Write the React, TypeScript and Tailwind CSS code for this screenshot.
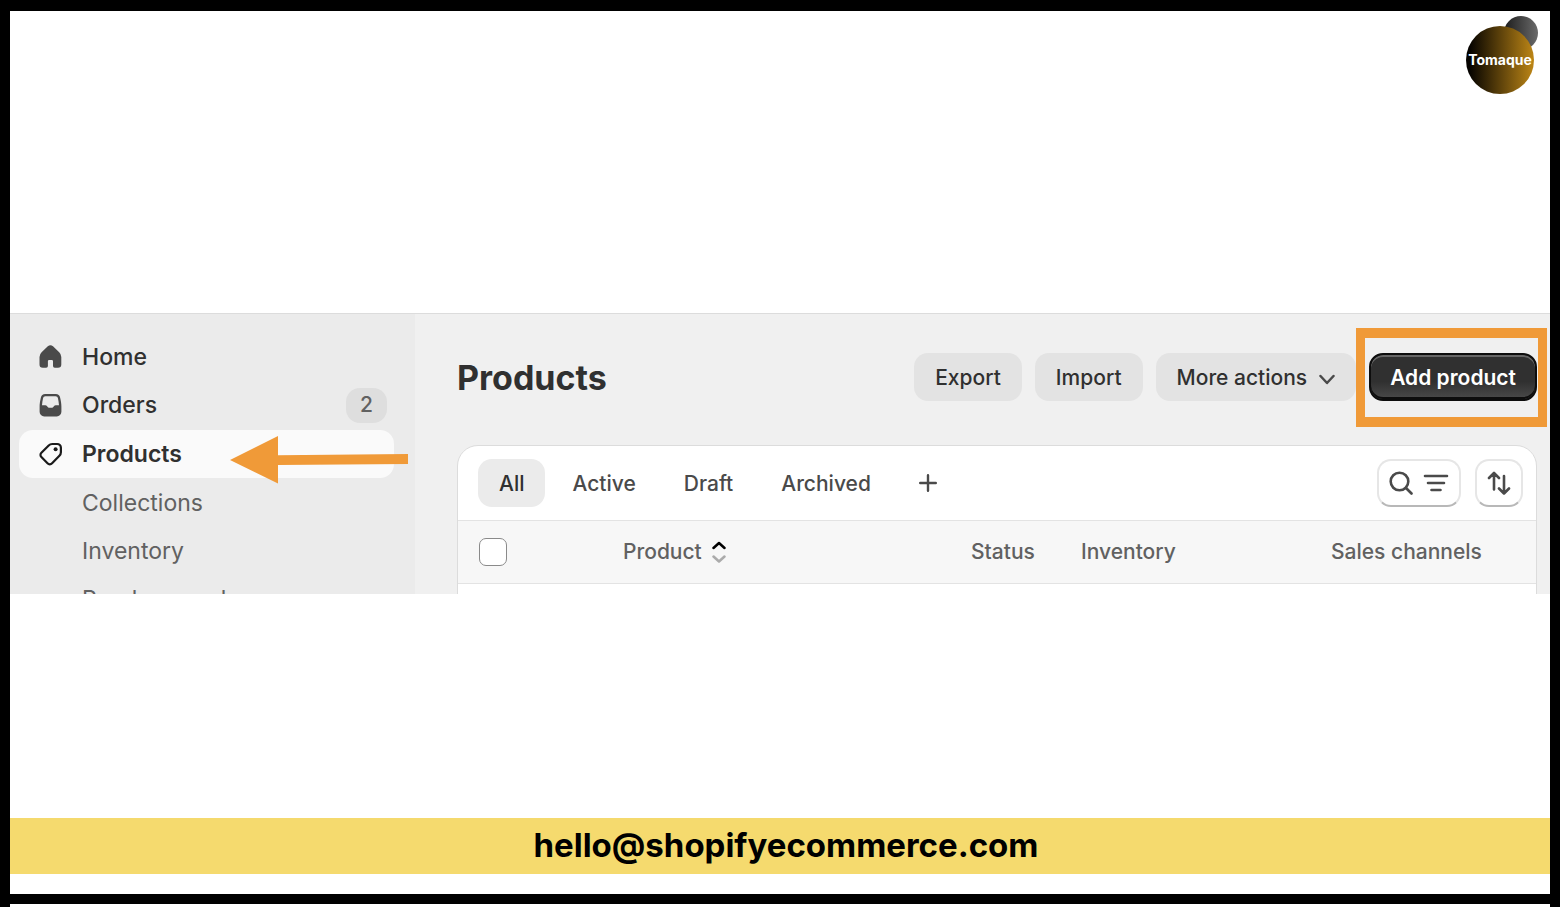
import { useState } from 'react';
import type { ReactNode } from 'react';

const TABS = ['All', 'Active', 'Draft', 'Archived'];
const SUB_ITEMS = ['Collections', 'Inventory', 'Purchase orders'];

function HomeIcon() {
  return (
    <svg viewBox="0 0 24 24" className="h-6 w-6 shrink-0" fill="#4a4a4a" aria-hidden="true">
      <path d="M9.8 1.3a3.9 3.9 0 0 1 5.2 0l6.2 5.9a6.6 6.6 0 0 1 2.1 4.8v7.4a3.3 3.3 0 0 1-3.3 3.3h-3.3a1.7 1.7 0 0 1-1.7-1.7v-4.7a1.2 1.2 0 0 0-1.2-1.2h-2.7a1.2 1.2 0 0 0-1.2 1.2v4.7a1.7 1.7 0 0 1-1.7 1.7H4.8a3.3 3.3 0 0 1-3.3-3.3v-7.4a6.6 6.6 0 0 1 2.1-4.8z" />
    </svg>
  );
}

function OrdersIcon() {
  return (
    <svg viewBox="0 0 24 24" className="h-6 w-6 shrink-0" fill="#4a4a4a" aria-hidden="true">
      <path
        fillRule="evenodd"
        d="M7.2 1h10.6a4.4 4.4 0 0 1 4.3 3.6c.8 3.5 1.3 6.3 1.3 9v5.2a4.6 4.6 0 0 1-4.6 4.6H6.2a4.6 4.6 0 0 1-4.6-4.6v-5.2c0-2.7.5-5.5 1.3-9A4.4 4.4 0 0 1 7.2 1zm.2 2.2a2.3 2.3 0 0 0-2.3 1.9c-.5 2.5-.9 4.7-1.1 7.1h3.3c.7 0 1.2.3 1.6.8l.8 1.1c.3.4.7.6 1.2.6h3.2c.5 0 .9-.2 1.2-.6l.8-1.1c.4-.5.9-.8 1.6-.8H21c-.2-2.4-.6-4.6-1.1-7.1a2.3 2.3 0 0 0-2.3-1.9z"
      />
    </svg>
  );
}

function TagIcon() {
  return (
    <svg viewBox="0 0 24 24" className="h-6 w-6 shrink-0" fill="none" aria-hidden="true">
      <path
        d="M14.2 2h5a3.7 3.7 0 0 1 3.7 3.7v4.6a5 5 0 0 1-1.5 3.5l-7.3 7.5a3.2 3.2 0 0 1-4.6 0l-6.1-6.2a3 3 0 0 1 0-4.3l7.3-7.3A5 5 0 0 1 14.2 2z"
        stroke="#1a1a1a"
        strokeWidth="2.2"
        strokeLinejoin="round"
      />
      <circle cx="17.6" cy="7.2" r="2" fill="#1a1a1a" />
    </svg>
  );
}

function Arrow() {
  return (
    <svg viewBox="0 0 178 48" className="absolute left-[211px] top-1.5 h-12 w-[178px]" fill="#f09a38" aria-hidden="true">
      <path d="M0 24 48 0v19.2L178 18v10L48 29v18.5z" />
    </svg>
  );
}

function Logo() {
  return (
    <svg viewBox="0 0 74 80" className="h-20 w-[74px]" role="img" aria-label="Tomaque">
      <defs>
        <linearGradient id="gold">
          <stop offset="0.05" stopColor="#050300" />
          <stop offset="1" stopColor="#bd8616" />
        </linearGradient>
        <linearGradient id="grey">
          <stop offset="0" stopColor="#1c1c1c" />
          <stop offset="1" stopColor="#6b6b6b" />
        </linearGradient>
      </defs>
      <circle cx="56" cy="18" r="17" fill="url(#grey)" />
      <circle cx="35" cy="45" r="34" fill="url(#gold)" />
      <text x="35" y="50" textAnchor="middle" fill="#fff" fontSize="14" fontWeight="700" fontFamily="Inter, sans-serif">
        Tomaque
      </text>
    </svg>
  );
}

type NavItemProps = {
  icon: ReactNode;
  label: string;
  active?: boolean;
  children?: ReactNode;
};

function NavItem({ icon, label, active, children }: NavItemProps) {
  return (
    <li className={`relative rounded-[14px] ${active ? 'mt-px bg-[#fafafa] font-semibold' : 'font-medium'}`}>
      <a href="#" className="flex h-12 items-center gap-5 pl-[19px] pr-[7px]">
        {icon}
        <span className="flex-1">{label}</span>
        {!active && children}
      </a>
      {active && children}
    </li>
  );
}

function Sidebar() {
  return (
    <nav className="w-[405px] shrink-0 bg-[#ebebeb] pl-[9px] pr-[21px] pt-[19px] text-[23px] text-[#303030]">
      <ul>
        <NavItem icon={<HomeIcon />} label="Home" />
        <NavItem icon={<OrdersIcon />} label="Orders">
          <span className="flex h-[35px] w-[41px] items-center justify-center rounded-[14px] bg-[#dedede] text-[21px] text-[#616161]">
            2
          </span>
        </NavItem>
        <NavItem icon={<TagIcon />} label="Products" active>
          <Arrow />
        </NavItem>
        {SUB_ITEMS.map((item) => (
          <li key={item}>
            <a href="#" className="flex h-12 items-center pl-[63px] pt-0.5 text-[#616161]">
              {item}
            </a>
          </li>
        ))}
      </ul>
    </nav>
  );
}

function GreyButton({ children }: { children: ReactNode }) {
  return (
    <button className="flex h-12 items-center gap-3 rounded-[14px] bg-[#e3e3e3] px-[21px] pt-0.5 font-medium text-[#303030]">
      {children}
    </button>
  );
}

function ProductsPanel() {
  const [tab, setTab] = useState('All');

  return (
    <main className="min-w-0 flex-1 bg-[#f0f0f0] pl-[42px] pr-[13px] pt-[39px] text-[21px]">
      <div className="flex items-center justify-between">
        <h1 className="pt-0.5 text-[34px] leading-10 font-bold text-[#303030]">Products</h1>
        <div className="flex gap-[13px]">
          <GreyButton>Export</GreyButton>
          <GreyButton>Import</GreyButton>
          <GreyButton>
            More actions
            <svg viewBox="2 0 16 20" className="h-5 w-4" fill="none" stroke="#4a4a4a" strokeWidth="2.5" strokeLinecap="round" strokeLinejoin="round">
              <path d="m3.5 8 6.5 7 6.5-7" />
            </svg>
          </GreyButton>
          <div className="relative">
            <button className="h-12 rounded-[14px] border-2 border-[#0d0d0d] bg-linear-to-b from-[#303030] from-60% to-[#4a4a4a] px-[19px] pt-0.5 font-semibold text-white shadow-[inset_0_2px_0_#666,inset_0_-2px_0_#0d0d0d]">
              Add product
            </button>
            <div className="pointer-events-none absolute -bottom-[26px] -left-[13px] -right-2.5 -top-[25px] border-x-[9px] border-y-[10px] border-[#f09a38]" />
          </div>
        </div>
      </div>

      <section className="mt-11 h-60 overflow-hidden rounded-t-[21px] border border-[#dcdcdc] bg-white">
        <div className="flex items-center justify-between py-[13px] pl-5 pr-[13px]">
          <div className="flex gap-1.5 font-medium">
            {TABS.map((name) => (
              <button
                key={name}
                onClick={() => setTab(name)}
                className={`h-12 rounded-[14px] px-[21px] pt-0.5 ${tab === name ? 'bg-[#ebebeb] text-[#303030]' : 'text-[#4a4a4a]'}`}
              >
                {name}
              </button>
            ))}
            <button aria-label="Add view" className="px-[21px]">
              <svg viewBox="0 0 18 18" className="h-[18px] w-[18px]" stroke="#4a4a4a" strokeWidth="2.4" strokeLinecap="round">
                <path d="M9 1.2v15.6M1.2 9h15.6" />
              </svg>
            </button>
          </div>
          <div className="flex gap-3.5">
            <button aria-label="Search and filter" className="flex h-12 w-[84px] items-center justify-center gap-2.5 rounded-[14px] border-2 border-[#e6e6e6] border-b-[#b8b8b8]">
              <svg viewBox="0 0 24 24" className="h-6 w-6" fill="none" stroke="#4a4a4a" strokeWidth="2.6" strokeLinecap="round">
                <circle cx="10.5" cy="10.5" r="8.8" />
                <path d="m17 17 5.5 5.5" />
              </svg>
              <svg viewBox="0 0 26 24" className="h-6 w-[26px]" stroke="#4a4a4a" strokeWidth="2.6" strokeLinecap="round">
                <path d="M2 5h22M5 12h16M8.5 19h9" />
              </svg>
            </button>
            <button aria-label="Sort" className="flex h-12 w-12 items-center justify-center rounded-[14px] border-2 border-[#e6e6e6] border-b-[#b8b8b8]">
              <svg viewBox="0 0 24 24" className="h-6 w-6" fill="none" stroke="#4a4a4a" strokeWidth="2.6" strokeLinecap="round" strokeLinejoin="round">
                <path d="M7 18.5V2M2 7l5-5 5 5M17 5v17.5M12 17.5l5 5 5-5" />
              </svg>
            </button>
          </div>
        </div>

        <table className="w-full table-fixed border-y border-[#e3e3e3] bg-[#f7f7f7] text-left text-[#616161]">
          <thead>
            <tr className="h-[63px] *:font-medium">
              <th className="w-[165px] pl-[21px]">
                <input
                  type="checkbox"
                  aria-label="Select all products"
                  className="block h-7 w-7 appearance-none rounded-[7px] border border-[#8a8a8a] bg-white checked:bg-[#303030]"
                />
              </th>
              <th className="w-[348px]" aria-sort="ascending">
                <button className="flex items-center gap-2.5">
                  Product
                  <svg viewBox="0 0 14 22" className="h-[22px] w-3.5" fill="none" strokeWidth="2.5" strokeLinecap="round" strokeLinejoin="round">
                    <path d="m1.5 7 5.5-5 5.5 5" stroke="#000" />
                    <path d="m1.5 15.5 5.5 5 5.5-5" stroke="#ababab" />
                  </svg>
                </button>
              </th>
              <th className="w-[110px]">Status</th>
              <th className="w-[250px]">Inventory</th>
              <th>Sales channels</th>
            </tr>
          </thead>
        </table>
      </section>
    </main>
  );
}

export default function App() {
  return (
    <div className="flex min-h-screen flex-col border-x-10 border-black bg-white font-['Inter',sans-serif]">
      <header className="flex h-[313px] items-start justify-end border-t-[11px] border-black pr-[11px] pt-1">
        <Logo />
      </header>

      <div className="flex h-[281px] overflow-hidden border-t border-[#dcdcdc]">
        <Sidebar />
        <ProductsPanel />
      </div>

      <div className="flex-1" />

      <footer>
        <div className="flex h-14 items-center justify-center bg-[#f5da6e] pl-3">
          <a href="mailto:hello@shopifyecommerce.com" className="text-[33px] font-bold text-black">
            hello@shopifyecommerce.com
          </a>
        </div>
        <div className="mb-[3px] h-[30px] border-b-10 border-black" />
      </footer>
    </div>
  );
}
